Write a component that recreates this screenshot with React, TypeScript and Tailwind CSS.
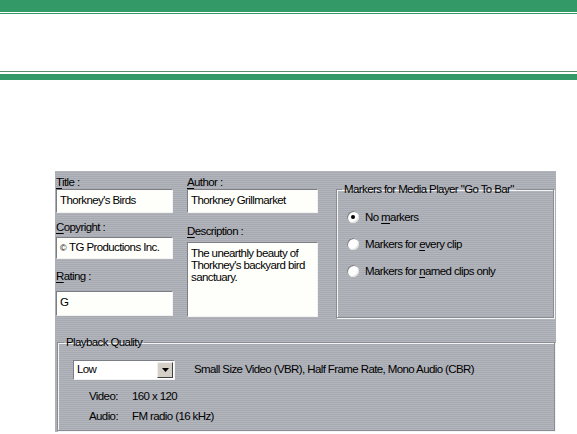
import React from "react";

const font = "font-['Liberation_Sans',Arial,sans-serif]";
const stripes =
  "bg-[repeating-linear-gradient(180deg,#b2b5bc_0px,#b2b5bc_1px,#a7aab1_1px,#a7aab1_2px)]";
const sunken =
  "border border-t-[#7b7e84] border-l-[#7b7e84] border-b-[#f2f2f2] border-r-[#f2f2f2] bg-[#fefefa]";
const etched =
  "border border-[#8a8d93] shadow-[inset_1px_1px_0_#f4f4f4,1px_1px_0_#f4f4f4]";

function Label({ k, rest }: { k: string; rest: string }) {
  return (
    <div className="h-[14px] leading-[14px]">
      <span className="underline underline-offset-[2px]">{k}</span>
      {rest}
    </div>
  );
}

function Field({ value, h }: { value: string; h: string }) {
  return <div className={`${sunken} ${h} px-[3px] pt-[4px] leading-[13px]`}>{value}</div>;
}

function Radio({ checked, label }: { checked?: boolean; label: React.ReactNode }) {
  return (
    <div className="flex h-[14px] items-center gap-[6px]">
      <div className="flex size-[12px] items-center justify-center rounded-full bg-[#fdfdfd] shadow-[inset_1px_1px_0_#7b7e84,inset_-1px_-1px_0_#e0e0e0]">
        {checked && <div className="size-[4px] rounded-full bg-black" />}
      </div>
      <span className="leading-[14px]">{label}</span>
    </div>
  );
}

function U({ c }: { c: string }) {
  return <span className="underline underline-offset-[2px]">{c}</span>;
}

export default function App() {
  return (
    <div className={`h-[434px] w-[577px] overflow-hidden bg-white text-[11.5px] tracking-[-0.6px] text-black ${font}`}>
      {/* header bands */}
      <div className="h-[12px] bg-[#339966]" />
      <div className="mt-[1px] h-[1px] bg-[#339966]" />
      <div className="mt-[57px] h-[1px] bg-[#5b8d6c]" />
      <div className="mt-[2px] h-[6px] bg-[#339966]" />

      {/* properties panel */}
      <div className={`ml-[55px] mt-[91px] h-[261px] w-[501px] ${stripes}`}>
        <div className="flex items-start pl-[1px] pt-[4px]">
          <div className="w-[117px]">
            <Label k="T" rest="itle :" />
            <Field value="Thorkney's Birds" h="h-[24px]" />
            <div className="mt-[7px]">
              <Label k="C" rest="opyright :" />
            </div>
            <div className={`${sunken} mt-[3px] h-[22px] px-[3px] pt-[3px] leading-[13px]`}>
              <span className="mr-[3px] text-[9px]">©</span>TG Productions Inc.
            </div>
            <div className="mt-[10px]">
              <Label k="R" rest="ating :" />
            </div>
            <div className="mt-[8px]">
              <Field value="G" h="h-[25px]" />
            </div>
          </div>

          <div className="ml-[14px] w-[131px]">
            <Label k="A" rest="uthor :" />
            <Field value="Thorkney Grillmarket" h="h-[24px]" />
            <div className="mt-[11px]">
              <Label k="D" rest="escription :" />
            </div>
            <div className={`${sunken} mt-[4px] h-[75px] px-[3px] pt-[4px] leading-[12px]`}>
              The unearthly beauty of Thorkney's backyard bird sanctuary.
            </div>
          </div>

          <fieldset className={`ml-[18px] mt-[7px] h-[136px] w-[218px] ${etched}`}>
            <legend className="ml-[5px] px-[2px] leading-[14px]">
              Markers for Media Player "Go To Bar"
            </legend>
            <div className="flex flex-col gap-[13px] pl-[10px] pt-[14px]">
              <Radio checked label={<>No <U c="m" />arkers</>} />
              <Radio label={<>Markers for <U c="e" />very clip</>} />
              <Radio label={<>Markers for <U c="n" />amed clips only</>} />
            </div>
          </fieldset>
        </div>

        <fieldset className={`ml-[2px] mt-[17px] h-[96px] w-[498px] ${etched}`}>
          <legend className="ml-[6px] px-[2px] leading-[14px]">Playback Quality</legend>
          <div className="pl-[15px] pt-[11px]">
            <div className="flex items-center">
              <div className={`${sunken} flex h-[20px] w-[102px] items-center bg-white pl-[3px] pr-[1px]`}>
                <span className="flex-1">Low</span>
                <div className="flex h-[16px] w-[16px] items-center justify-center border border-t-[#f0f0f0] border-l-[#f0f0f0] border-b-[#404040] border-r-[#404040] bg-[#d4d0c8]">
                  <svg width="7" height="4" viewBox="0 0 7 4">
                    <path d="M0 0h7L3.5 4z" fill="#000" />
                  </svg>
                </div>
              </div>
              <span className="ml-[19px]">
                Small Size Video (VBR), Half Frame Rate, Mono Audio (CBR)
              </span>
            </div>
            <div className="mt-[10px] flex h-[14px] items-center pl-[16px]">
              <span className="w-[43px]">Video:</span>
              <span>160 x 120</span>
            </div>
            <div className="mt-[6px] flex h-[14px] items-center pl-[16px]">
              <span className="w-[43px]">Audio:</span>
              <span>FM radio (16 kHz)</span>
            </div>
          </div>
        </fieldset>
      </div>
    </div>
  );
}
